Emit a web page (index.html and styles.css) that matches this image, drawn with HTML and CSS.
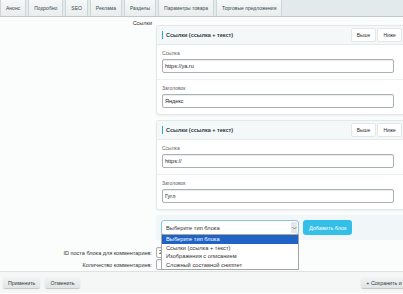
FILE: index.html
```html
<!DOCTYPE html>
<html>
  <head>
    <link rel="stylesheet" href="styles.css">
  </head>
  <body>
    <div class="tabs">
      <span class="tab">Анонс</span>
      <span class="tab">Подробно</span>
      <span class="tab">SEO</span>
      <span class="tab">Реклама</span>
      <span class="tab">Разделы</span>
      <span class="tab">Параметры товара</span>
      <span class="tab">Торговые предложения</span>
    </div>

    <div class="content">
      <div class="row">
        <div class="row-label">Ссылки</div>
        <div class="blocks">
          <div class="card">
            <div class="card-head">
              <span class="card-title">Ссылки (ссылка + текст)</span>
              <span class="head-buttons">
                <span class="small-btn">Выше</span>
                <span class="small-btn">Ниже</span>
                <span class="small-btn">Удалить</span>
              </span>
            </div>
            <div class="field">
              <div class="field-label">Ссылка</div>
              <div class="input">https://ya.ru</div>
            </div>
            <div class="field">
              <div class="field-label">Заголовок</div>
              <div class="input">Яндекс</div>
            </div>
          </div>

          <div class="card">
            <div class="card-head">
              <span class="card-title">Ссылки (ссылка + текст)</span>
              <span class="head-buttons">
                <span class="small-btn">Выше</span>
                <span class="small-btn">Ниже</span>
                <span class="small-btn">Удалить</span>
              </span>
            </div>
            <div class="field">
              <div class="field-label">Ссылка</div>
              <div class="input">https://</div>
            </div>
            <div class="field">
              <div class="field-label">Заголовок</div>
              <div class="input">Гугл</div>
            </div>
          </div>

          <div class="add-block">
            <div class="select-wrap">
              <div class="select">
                <span>Выберите тип блока</span>
                <span class="select-arrow">
                  <svg width="5" height="4" viewBox="0 0 5 4"><path d="M0.5 1 L2.5 3 L4.5 1" fill="none" stroke="#777" stroke-width="0.8"/></svg>
                </span>
              </div>
              <ul class="options">
                <li class="selected">Выберите тип блока</li>
                <li>Ссылки (ссылка + текст)</li>
                <li>Изображения с описанием</li>
                <li>Сложный составной сниппет</li>
              </ul>
            </div>
            <span class="add-btn">Добавить блок</span>
          </div>
        </div>
      </div>

      <div class="row row-small row-first">
        <div class="row-label">ID поста блока для комментариев:</div>
        <div><span class="input input-short">2</span></div>
      </div>
      <div class="row row-small">
        <div class="row-label">Количество комментариев:</div>
        <div><span class="input input-mid"></span></div>
      </div>
    </div>

    <div class="footer">
      <span class="btn">Применить</span>
      <span class="btn">Отменить</span>
      <span class="btn btn-save">+ Сохранить и добавить</span>
    </div>
  </body>
</html>
```

FILE: styles.css
```css
body {
  margin: 0;
  width: 403px;
  height: 294px;
  overflow: hidden;
  font-family: "Liberation Sans", Arial, sans-serif;
  font-size: 5.5px;
  color: #333;
  background: #fff;
}

.tabs {
  display: flex;
  gap: 2px;
  height: 16px;
  background: #e3eaec;
  border-bottom: 1px solid #bfc8cb;
}

.tab {
  display: flex;
  align-items: center;
  padding: 0 5px;
  background: linear-gradient(#f6f8f8, #e9eded);
  border: 1px solid #cfd6d8;
  border-top: none;
  border-bottom: none;
  font-size: 5px;
  color: #3b4a50;
}

.content {
  display: flex;
  flex-direction: column;
  height: 255px;
  padding-top: 2px;
  background: #fbfcfc;
  border-bottom: 1px solid #dde3e5;
  box-sizing: border-box;
}

.row {
  display: grid;
  grid-template-columns: 152px 1fr;
  column-gap: 4px;
}

.row-label {
  text-align: right;
  padding-top: 1px;
}

.blocks {
  padding-top: 6px;
  width: 279px;
}

.card {
  background: #fff;
  border: 1px solid #e2e8ea;
  border-radius: 3px;
  box-shadow: 0 1px 2px rgba(0, 0, 0, 0.06);
  margin-bottom: 5px;
}

.card-head {
  display: flex;
  align-items: center;
  justify-content: space-between;
  height: 18px;
  padding-left: 5px;
  background: #f5f8f9;
  border-bottom: 1px solid #e5eaec;
}

.card-title {
  font-weight: bold;
  border-left: 1.5px solid #2aa9c8;
  padding-left: 3px;
  line-height: 8px;
  color: #2f3a3e;
}

.head-buttons {
  display: flex;
  gap: 1px;
}

.small-btn {
  display: flex;
  align-items: center;
  height: 12px;
  padding: 0 5px;
  background: #fff;
  border: 1px solid #e3e7e8;
  border-radius: 2px;
  font-size: 5px;
}

.field {
  padding: 5px 5px 6px;
  border-top: 1px solid #edf0f1;
}

.card-head + .field {
  border-top: none;
}

.field-label {
  font-size: 5px;
  color: #666;
  margin-bottom: 3px;
}

.input {
  display: flex;
  align-items: center;
  width: 232px;
  height: 14px;
  padding-left: 2px;
  box-sizing: border-box;
  background: #fff;
  border: 1px solid #a8b1b5;
  border-radius: 2px;
  box-shadow: inset 0 1px 1px rgba(0, 0, 0, 0.08);
  color: #222;
}

.add-block {
  display: flex;
  gap: 4px;
  align-items: flex-start;
  padding: 5px;
  background: #f1f6f8;
  border-radius: 3px;
}

.select-wrap {
  position: relative;
}

.select {
  display: flex;
  align-items: center;
  justify-content: space-between;
  width: 138px;
  height: 15px;
  padding-left: 4px;
  box-sizing: border-box;
  background: #fff;
  border: 1px solid #8cc3de;
  border-radius: 3px;
  font-size: 5.7px;
}

.select-arrow {
  display: flex;
  align-items: center;
  justify-content: center;
  width: 6px;
  height: 11px;
  margin-right: 1px;
  background: #e4e6e7;
}

.options {
  position: absolute;
  top: 14px;
  left: 0;
  width: 138px;
  margin: 0;
  padding: 0;
  list-style: none;
  background: #fff;
  border: 1px solid #a5a5a5;
  box-sizing: border-box;
  font-size: 5.7px;
  z-index: 2;
}

.options li {
  height: 8.6px;
  line-height: 8.6px;
  padding-left: 4px;
  color: #333;
}

.options .selected {
  background: #1f63c6;
  color: #fff;
}

.add-btn {
  display: flex;
  align-items: center;
  height: 15px;
  padding: 0 6px;
  background: #34bfe8;
  border-radius: 3px;
  color: #fff;
  font-size: 5.5px;
}

.row-small {
  height: 13px;
  align-items: center;
}

.row-first {
  margin-top: 6px;
}

.input-short {
  width: 12px;
  height: 11px;
}

.input-mid {
  width: 111px;
  height: 11px;
}

.footer {
  display: flex;
  gap: 5px;
  align-items: center;
  height: 21px;
  padding: 0 3px;
  background: #f5f7f7;
}

.btn {
  display: flex;
  align-items: center;
  height: 11px;
  padding: 0 5px;
  background: linear-gradient(#f2f4f4, #dfe4e5);
  border-radius: 2px;
  box-shadow: 0 1px 1px rgba(0, 0, 0, 0.2);
  font-size: 5.3px;
  color: #333;
}

.btn-save {
  margin-left: auto;
  margin-right: -31px;
  white-space: nowrap;
}
```
